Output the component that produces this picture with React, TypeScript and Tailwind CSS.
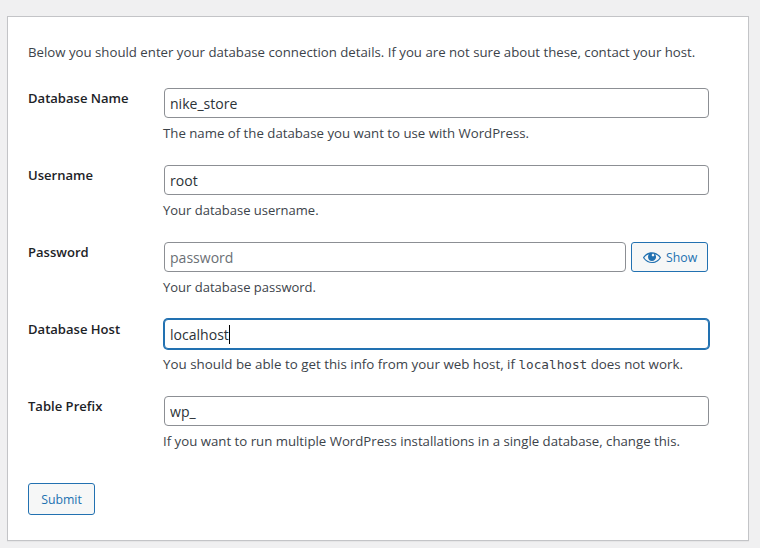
import type { ReactNode } from "react";

const inputBase =
  "block h-[30px] w-full min-w-0 rounded bg-white pl-[5px] pr-2 pt-[1px] text-[14.05px] text-[#2c3338] outline-none placeholder:text-[#6b7075] placeholder:opacity-100";
const inputIdle = "border border-[#8c8f94]";
const inputFocused = "border border-[#2271b1] shadow-[0_0_0_1px_#2271b1]";

type FieldProps = { id: string; label: string; help: ReactNode; helpSize?: string; children: ReactNode };

function Field({ id, label, help, helpSize = "text-[13.23px]", children }: FieldProps) {
  return (
    <div className="flex h-[77px]">
      <label htmlFor={id} className="w-[136px] shrink-0 text-[13.05px] leading-5 font-semibold text-[#1d2327]">
        {label}
      </label>
      <div className="w-[545px]">
        {children}
        <p className={`-ml-px mt-[5px] whitespace-nowrap leading-5 ${helpSize}`}>{help}</p>
      </div>
    </div>
  );
}

function EyeIcon() {
  return (
    <svg viewBox="0 0 20 20" className="h-5 w-5 shrink-0" fill="currentColor" aria-hidden="true">
      <path d="M18.3 9.5C15 4.9 8.5 3.8 3.9 7.2c-1.2.9-2.2 2.1-3 3.4.2.4.5.8.8 1.2 3.3 4.6 9.6 5.6 14.2 2.4.9-.7 1.7-1.4 2.4-2.4.3-.4.5-.8.8-1.2-.3-.4-.5-.8-.8-1.1zm-8.2-2.3c.5-.5 1.3-.5 1.8 0s.5 1.3 0 1.8-1.3.5-1.8 0-.5-1.3 0-1.8zm-.1 7.7c-3.1 0-6-1.6-7.7-4.2C3.5 9 5.1 7.8 7 7.2c-.7.8-1 1.7-1 2.7 0 2.2 1.7 4.1 4 4.1 2.2 0 4.1-1.7 4.1-4v-.1c0-1-.4-2-1.1-2.7 1.9.6 3.5 1.8 4.7 3.5-1.7 2.6-4.6 4.2-7.7 4.2z" />
    </svg>
  );
}

export default function App() {
  return (
    <div className="h-[548px] w-[760px] overflow-hidden bg-[#f0f0f1] pl-[7px] pt-4 font-['Open_Sans','Noto_Sans',sans-serif] text-[#3c434a]">
      <form
        className="h-[525px] w-[742px] border border-[#c3c4c7] bg-white pl-5 pt-[25px] shadow-[0_1px_1px_rgba(0,0,0,0.04)]"
        onSubmit={(e) => e.preventDefault()}
      >
        <p className="mb-[26px] whitespace-nowrap text-[13.22px] leading-5">
          Below you should enter your database connection details. If you are not sure about these, contact your host.
        </p>
        <Field id="dbname" label="Database Name" help="The name of the database you want to use with WordPress.">
          <input id="dbname" className={`${inputBase} ${inputIdle}`} defaultValue="nike_store" />
        </Field>
        <Field id="uname" label="Username" help="Your database username." helpSize="text-[13px]">
          <input id="uname" className={`${inputBase} ${inputIdle}`} defaultValue="root" />
        </Field>
        <Field id="pwd" label="Password" help="Your database password." helpSize="text-[13px]">
          <div className="flex gap-[5px] pr-px">
            <input id="pwd" className={`${inputBase} ${inputIdle}`} placeholder="password" />
            <button
              type="button"
              className="flex h-[30px] w-[77px] shrink-0 items-center gap-1 rounded-[3px] border border-[#2271b1] bg-[#f6f7f7] pl-[10px] text-[12.3px] text-[#2271b1]"
            >
              <EyeIcon />
              <span className="pt-[2px]">Show</span>
            </button>
          </div>
        </Field>
        <Field
          id="dbhost"
          label="Database Host"
          helpSize="text-[13.35px]"
          help={
            <>
              You should be able to get this info from your web host, if{" "}
              <code className="font-['DejaVu_Sans_Mono',monospace] text-[12.7px]">localhost</code> does not work.
            </>
          }
        >
          <div className="relative">
            <input id="dbhost" className={`${inputBase} ${inputFocused}`} defaultValue="localhost" />
            <span className="absolute left-[65px] top-[6px] h-[19px] w-px bg-black" />
          </div>
        </Field>
        <Field
          id="prefix"
          label="Table Prefix"
          help="If you want to run multiple WordPress installations in a single database, change this."
        >
          <input id="prefix" className={`${inputBase} ${inputIdle}`} defaultValue="wp_" />
        </Field>
        <button
          type="submit"
          className="mt-[10px] h-8 w-[67px] rounded-[3px] border border-[#2271b1] bg-[#f6f7f7] pt-[2px] text-[12.3px] text-[#2271b1]"
        >
          Submit
        </button>
      </form>
    </div>
  );
}
